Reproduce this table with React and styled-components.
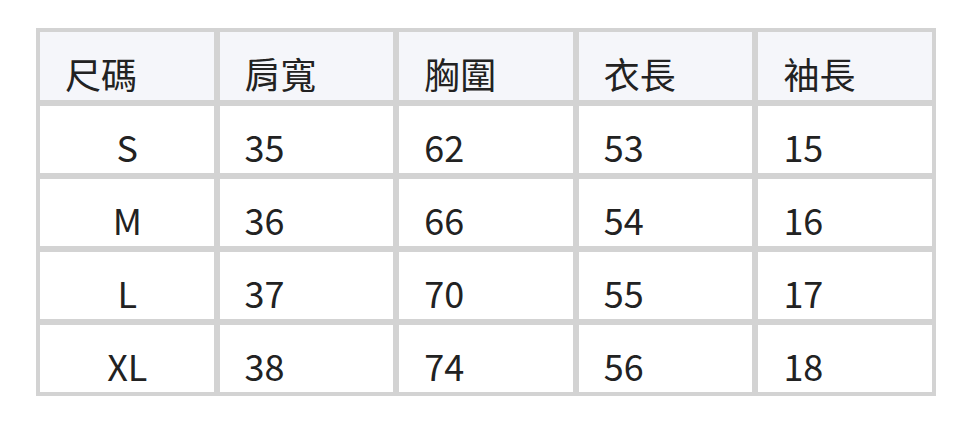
import React from "react";
import styled, { createGlobalStyle } from "styled-components";

const GlobalStyle = createGlobalStyle`
  body {
    margin: 0;
    background: #ffffff;
    font-family: "Noto Sans CJK TC", "Noto Sans", sans-serif;
    color: #222222;
  }
`;

const Page = styled.div`
  padding: 28px 0 0 36px;
`;

const Table = styled.table`
  width: 900px;
  border-collapse: separate;
  border-spacing: 0;
  border: 1px solid #d3d3d3;
  table-layout: fixed;
  font-size: 36px;
  font-weight: 400;
`;

const HeadRow = styled.tr`
  height: 74px;
  background: #f5f6fa;
`;

const Row = styled.tr`
  height: 73px;
`;

const HeadCell = styled.th`
  border: 3px solid #d3d3d3;
  font-weight: 400;
  text-align: left;
  vertical-align: bottom;
  padding: 0 24px 5px 25px;
  line-height: 44px;
`;

const Cell = styled.td`
  border: 3px solid #d3d3d3;
  text-align: ${(p) => (p.$center ? "center" : "left")};
  vertical-align: bottom;
  padding: 0 24px 5px 25px;
  line-height: 44px;
`;

const headers = ["尺碼", "肩寬", "胸圍", "衣長", "袖長"];
const rows = [
  ["S", 35, 62, 53, 15],
  ["M", 36, 66, 54, 16],
  ["L", 37, 70, 55, 17],
  ["XL", 38, 74, 56, 18],
];

export default function App() {
  return (
    <Page>
      <GlobalStyle />
      <Table>
        <thead>
          <HeadRow>
            {headers.map((h) => (
              <HeadCell key={h}>{h}</HeadCell>
            ))}
          </HeadRow>
        </thead>
        <tbody>
          {rows.map((r) => (
            <Row key={r[0]}>
              {r.map((v, i) => (
                <Cell key={i} $center={i === 0}>
                  {v}
                </Cell>
              ))}
            </Row>
          ))}
        </tbody>
      </Table>
    </Page>
  );
}
